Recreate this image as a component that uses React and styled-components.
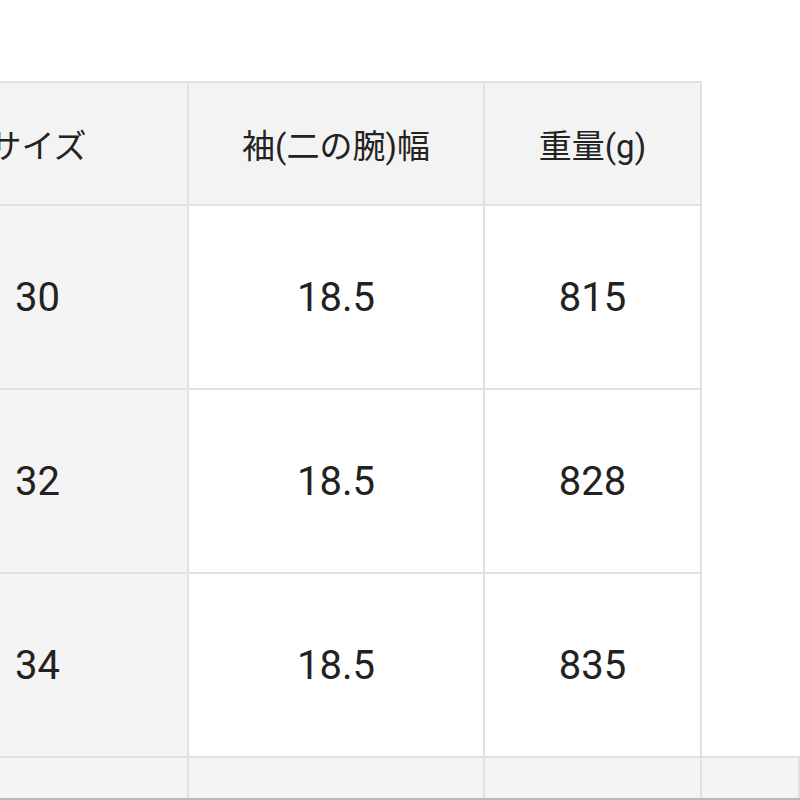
import React from 'react';
import styled, { createGlobalStyle } from 'styled-components';

const GlobalStyle = createGlobalStyle`
  html, body {
    margin: 0;
    padding: 0;
    background: #ffffff;
    overflow: hidden;
  }
  body {
    font-family: Roboto, "Noto Sans CJK JP", sans-serif;
    color: #222222;
  }
`;

const Page = styled.div`
  width: 800px;
  height: 800px;
  display: flex;
  flex-direction: column;
  overflow: hidden;
`;

const TableWrap = styled.div`
  flex: 1;
  min-height: 0;
  overflow: hidden;
  padding-top: 81px;
  margin-left: -114px;
`;

const Table = styled.table`
  width: 914px;
  table-layout: fixed;
  border-collapse: collapse;
`;

const HeadCell = styled.th`
  height: 121px;
  padding: 0;
  border: 2px solid #dfe2e5;
  background: #f3f3f3;
  font-size: 33px;
  font-weight: 400;
  text-align: center;
  vertical-align: middle;
  white-space: nowrap;
`;

const Cell = styled.td`
  height: ${(p) => (p.$short ? '40px' : '182px')};
  padding: 0;
  border: 2px solid #dfe2e5;
  background: ${(p) => (p.$shaded ? '#f4f4f4' : '#ffffff')};
  font-size: 40px;
  text-align: center;
  vertical-align: middle;
`;

const BottomEdge = styled.div`
  height: 2px;
  background: #b9b9b9;
`;

const rows = [
  { size: '30', sleeve: '18.5', weight: '815' },
  { size: '32', sleeve: '18.5', weight: '828' },
  { size: '34', sleeve: '18.5', weight: '835' },
];

export default function App() {
  return (
    <Page>
      <GlobalStyle />
      <TableWrap>
        <Table>
          <colgroup>
            <col style={{ width: 301 }} />
            <col style={{ width: 296 }} />
            <col style={{ width: 217 }} />
            <col />
          </colgroup>
          <thead>
            <tr>
              <HeadCell>サイズ</HeadCell>
              <HeadCell>袖(二の腕)幅</HeadCell>
              <HeadCell>重量(g)</HeadCell>
            </tr>
          </thead>
          <tbody>
            {rows.map((r) => (
              <tr key={r.size}>
                <Cell $shaded>{r.size}</Cell>
                <Cell>{r.sleeve}</Cell>
                <Cell>{r.weight}</Cell>
              </tr>
            ))}
            <tr>
              <Cell $shaded $short />
              <Cell $shaded $short />
              <Cell $shaded $short />
              <Cell $shaded $short />
            </tr>
          </tbody>
        </Table>
      </TableWrap>
      <BottomEdge />
    </Page>
  );
}
